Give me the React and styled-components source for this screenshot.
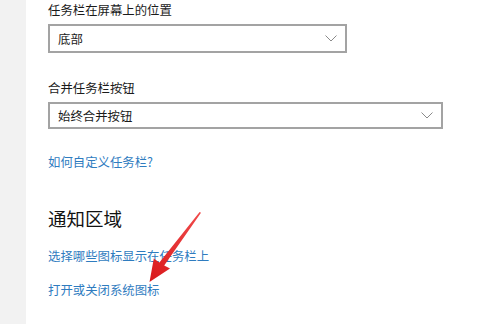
import React from "react";
import styled, { createGlobalStyle } from "styled-components";

const Global = createGlobalStyle`
  html, body { margin: 0; padding: 0; background: #ffffff; }
  body { font-family: "Noto Sans CJK SC", "Noto Sans", sans-serif; }
`;

const Page = styled.div`
  position: relative;
  display: flex;
  width: 500px;
  height: 324px;
  overflow: hidden;
  background: #ffffff;
`;

const Sidebar = styled.div`
  width: 26px;
  flex: none;
  background: #f2f2f2;
`;

const Content = styled.div`
  display: flex;
  flex-direction: column;
  align-items: flex-start;
  padding: 1px 0 0 22px;
`;

const Label = styled.div`
  font-size: 12.4px;
  line-height: 18px;
  color: #1b1b1b;
  margin-top: ${(p) => p.$mt || 0}px;
  margin-bottom: 5px;
`;

const Select = styled.div`
  box-sizing: border-box;
  display: flex;
  align-items: center;
  justify-content: space-between;
  width: ${(p) => p.$w}px;
  height: ${(p) => p.$h}px;
  border: 2px solid #a3a3a3;
  padding: 0 8px 0 8px;
  background: #fff;
  font-size: 12.4px;
  color: #1b1b1b;
`;

const Link = styled.a`
  display: block;
  font-size: 12.4px;
  line-height: 18px;
  color: #2f7cbf;
  text-decoration: none;
  margin-top: ${(p) => p.$mt}px;
`;

const Heading = styled.div`
  font-size: 18.5px;
  line-height: 26px;
  color: #111;
  margin-top: 34px;
`;

const Overlay = styled.svg`
  position: absolute;
  left: 0;
  top: 0;
  pointer-events: none;
`;

const Chevron = () => (
  <svg width="12" height="7" viewBox="0 0 12 7">
    <polyline points="0.5,0.5 6,6 11.5,0.5" fill="none" stroke="#8a8a8a" strokeWidth="1" />
  </svg>
);

export default function App() {
  return (
    <>
      <Global />
      <Page>
        <Sidebar />
        <Content>
          <Label>任务栏在屏幕上的位置</Label>
          <Select $w={299} $h={29}>
            <span>底部</span>
            <Chevron />
          </Select>
          <Label $mt={26}>合并任务栏按钮</Label>
          <Select $w={395} $h={27}>
            <span>始终合并按钮</span>
            <Chevron />
          </Select>
          <Link href="#" $mt={24}>如何自定义任务栏?</Link>
          <Heading>通知区域</Heading>
          <Link href="#" $mt={16}>选择哪些图标显示在任务栏上</Link>
          <Link href="#" $mt={16}>打开或关闭系统图标</Link>
        </Content>
        <Overlay width="500" height="324" viewBox="0 0 500 324">
          <defs>
            <linearGradient id="ar" x1="200" y1="213" x2="150" y2="281" gradientUnits="userSpaceOnUse">
              <stop offset="0" stopColor="#f04a4a" />
              <stop offset="1" stopColor="#d9191c" />
            </linearGradient>
          </defs>
          <polygon
            points="201,212.8 199.6,212 159.4,262.4 153.8,258.6 149.5,282 170,268.6 164.2,265.6"
            fill="url(#ar)"
          />
        </Overlay>
      </Page>
    </>
  );
}
